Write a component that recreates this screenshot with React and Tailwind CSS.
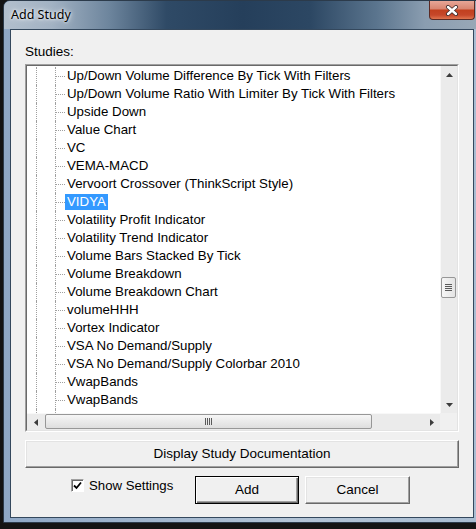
const studies = [
  "Up/Down Volume Difference By Tick With Filters",
  "Up/Down Volume Ratio With Limiter By Tick With Filters",
  "Upside Down",
  "Value Chart",
  "VC",
  "VEMA-MACD",
  "Vervoort Crossover (ThinkScript Style)",
  "VIDYA",
  "Volatility Profit Indicator",
  "Volatility Trend Indicator",
  "Volume Bars Stacked By Tick",
  "Volume Breakdown",
  "Volume Breakdown Chart",
  "volumeHHH",
  "Vortex Indicator",
  "VSA No Demand/Supply",
  "VSA No Demand/Supply Colorbar 2010",
  "VwapBands",
  "VwapBands",
  "Williams Fractal",
];

// little scroll arrow glyphs
function Arrow({ dir }) {
  const paths = {
    up: "M3.5 0L7 4H0Z",
    down: "M0 0H7L3.5 4Z",
    left: "M4 0V7L0 3.5Z",
    right: "M0 0L4 3.5L0 7Z",
  };
  const vertical = dir === "up" || dir === "down";
  return (
    <svg
      width={vertical ? 7 : 4}
      height={vertical ? 4 : 7}
      viewBox={vertical ? "0 0 7 4" : "0 0 4 7"}
    >
      <path d={paths[dir]} fill="#3c3c3c" />
    </svg>
  );
}

function TreeRow({ label, selected }) {
  return (
    <div className="flex h-[18px] shrink-0">
      <div className="w-[9px] shrink-0" />
      <div className="w-[19px] shrink-0 border-l border-dotted border-[#a0a0a0]" />
      <div className="flex w-[10px] shrink-0 items-center border-l border-dotted border-[#a0a0a0]">
        <div className="w-full border-t border-dotted border-[#a0a0a0]" />
      </div>
      <span
        className={
          selected
            ? "mt-[1px] h-[16px] whitespace-nowrap bg-[#3399ff] px-[2px] leading-[16px] text-white"
            : "h-[18px] whitespace-nowrap px-[2px] leading-[18px] text-black"
        }
      >
        {label}
      </span>
    </div>
  );
}

function VScrollBar() {
  return (
    <div className="flex w-[17px] shrink-0 flex-col border-l border-[#f8f8f8] bg-[#ebebeb]">
      <div className="flex h-[17px] items-center justify-center">
        <Arrow dir="up" />
      </div>
      <div className="flex-1">
        <div className="mt-[194px] flex h-[21px] w-[15px] flex-col items-center justify-center gap-[1px] rounded-[2px] border border-[#979797] bg-[linear-gradient(90deg,#f6f6f6,#e4e4e4)]">
          <div className="h-px w-[7px] bg-[#5a5a5a]" />
          <div className="h-px w-[7px] bg-[#5a5a5a]" />
          <div className="h-px w-[7px] bg-[#5a5a5a]" />
          <div className="h-px w-[7px] bg-[#5a5a5a]" />
        </div>
      </div>
      <div className="flex h-[17px] items-center justify-center">
        <Arrow dir="down" />
      </div>
    </div>
  );
}

function HScrollBar() {
  return (
    <div className="flex h-[17px] shrink-0">
      <div className="flex flex-1 border-t border-[#f8f8f8] bg-[#ebebeb]">
        <div className="flex w-[17px] items-center justify-center">
          <Arrow dir="left" />
        </div>
        <div className="ml-[1px] flex h-[15px] w-[327px] items-center justify-center gap-[1px] rounded-[2px] border border-[#979797] bg-[linear-gradient(180deg,#f6f6f6,#dedede)]">
          <div className="h-[7px] w-px bg-[#5a5a5a]" />
          <div className="h-[7px] w-px bg-[#5a5a5a]" />
          <div className="h-[7px] w-px bg-[#5a5a5a]" />
          <div className="h-[7px] w-px bg-[#5a5a5a]" />
        </div>
        <div className="flex-1" />
        <div className="flex w-[17px] items-center justify-center">
          <Arrow dir="right" />
        </div>
      </div>
      <div className="w-[17px] bg-[#f0f0f0]" />
    </div>
  );
}

function ClassicButton({ children, isDefault, className }) {
  return (
    <button
      className={
        (isDefault
          ? "border border-black shadow-[inset_1px_1px_0_#ffffff,inset_-1px_-1px_0_#696969,inset_-2px_-2px_0_#a0a0a0] "
          : "border border-t-white border-l-white border-r-[#696969] border-b-[#696969] shadow-[inset_-1px_-1px_0_#a0a0a0,inset_1px_1px_0_#e3e3e3] ") +
        "flex h-[28px] items-center justify-center bg-[#f0f0f0] text-black " +
        className
      }
    >
      {children}
    </button>
  );
}

export default function App() {
  return (
    <div className="h-[529px] w-[476px] overflow-hidden bg-[#141414] font-['Liberation_Sans',Arial,sans-serif] text-[13.5px]">
      <div className="ml-[3px] flex h-[523px] w-[480px] flex-col rounded-t-[7px] border border-[#2c3b4b] bg-[linear-gradient(90deg,#8fa8c6,#b3c4d6_60%,#a9bdd2)]">
        {/* title bar */}
        <div className="flex h-[28px] shrink-0 items-start justify-between rounded-t-[6px] bg-[linear-gradient(90deg,#b2bfcd_0%,#a2b2c3_10%,#6d859d_22%,#2f4a66_34%,#253f5b_50%,#2c4763_64%,#5b758e_78%,#8a9db0_88%,#9aa9b7_100%)]">
          <span className="ml-[7px] mt-[5px] font-['Noto_Sans',sans-serif] text-[12.5px] leading-[17px] text-black [text-shadow:0_0_6px_#ffffff,0_0_3px_#ffffff]">
            Add Study
          </span>
          <div className="mr-[7px] flex h-[19px] w-[46px] items-center justify-center rounded-b-[4px] border border-t-0 border-[#5b2a24] bg-[linear-gradient(180deg,#e7a697_0%,#d98672_42%,#c2401f_52%,#c6472a_78%,#e0744e_100%)]">
            <svg width="14" height="11" viewBox="0 0 14 11">
              <path d="M3 2L11 9M11 2L3 9" stroke="#3a2a2a" strokeWidth="4" strokeLinecap="round" />
              <path d="M3 2L11 9M11 2L3 9" stroke="#ffffff" strokeWidth="2.4" strokeLinecap="round" />
            </svg>
          </div>
        </div>

        {/* client area */}
        <div className="mx-[6px] flex h-[489px] w-[464px] shrink-0 flex-col border border-[#34485d] bg-[#f0f0f0] px-[14px] pt-[14px]">
          <div className="h-[16px] leading-[16px] text-black">Studies:</div>

          <div className="mt-[4px] h-[368px] border border-t-[#a0a0a0] border-l-[#a0a0a0] border-r-white border-b-white">
            <div className="flex h-full flex-col border border-t-[#696969] border-l-[#696969] border-r-[#e3e3e3] border-b-[#e3e3e3]">
              <div className="flex h-[347px] shrink-0">
                <div className="flex flex-1 flex-col overflow-hidden bg-white pt-[1px] text-[13.3px]">
                  {studies.map((name, i) => (
                    <TreeRow key={i} label={name} selected={name === "VIDYA"} />
                  ))}
                </div>
                <VScrollBar />
              </div>
              <HScrollBar />
            </div>
          </div>

          <ClassicButton className="mt-[8px] w-full">
            Display Study Documentation
          </ClassicButton>

          <div className="mt-[8px] flex">
            <label className="ml-[46px] mt-[3px] flex h-[13px] w-[124px] items-center">
              <span className="flex h-[13px] w-[13px] items-center justify-center border border-t-[#a0a0a0] border-l-[#a0a0a0] border-r-white border-b-white bg-white shadow-[inset_1px_1px_0_#696969]">
                <svg width="9" height="9" viewBox="0 0 9 9">
                  <path d="M1 4.5L3.5 7L8 1.5" fill="none" stroke="#000" strokeWidth="1.8" />
                </svg>
              </span>
              <span className="ml-[5px] whitespace-nowrap text-[13.2px] leading-[16px] text-black">
                Show Settings
              </span>
            </label>
            <ClassicButton isDefault className="w-[104px]">
              Add
            </ClassicButton>
            <ClassicButton className="ml-[6px] w-[105px]">Cancel</ClassicButton>
          </div>
        </div>
      </div>
    </div>
  );
}
